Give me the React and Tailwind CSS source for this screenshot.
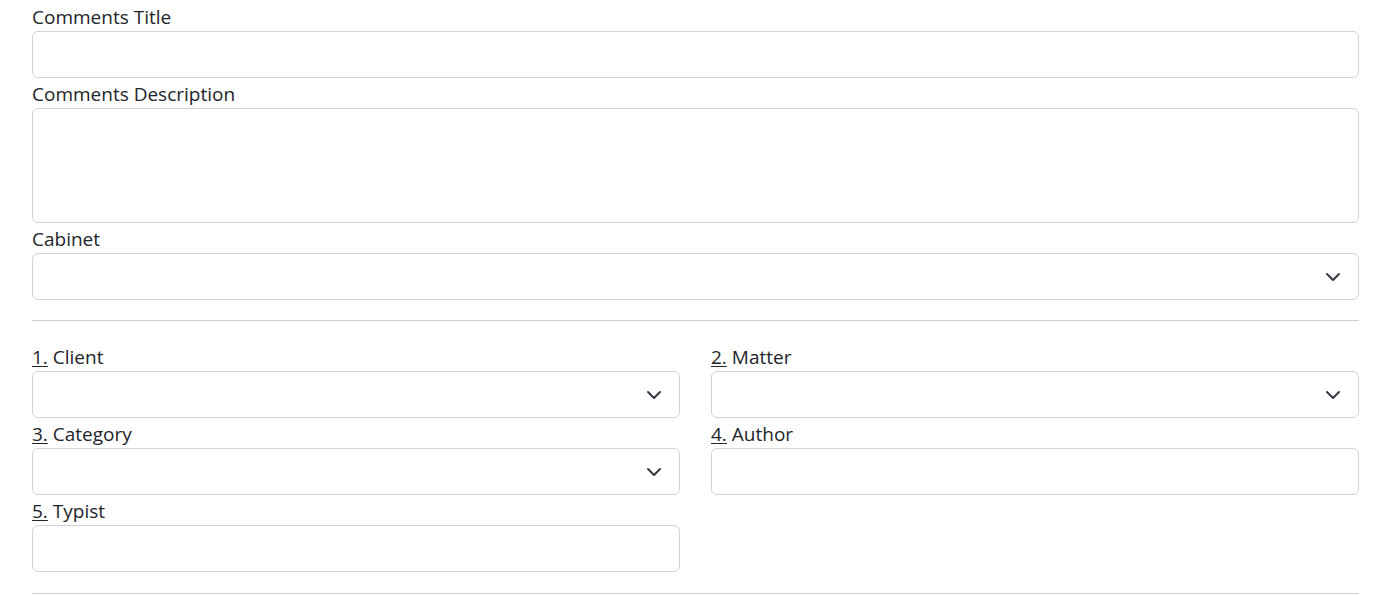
import React from 'react';

const Chevron = () => (
  <svg className="absolute right-[17px] top-1/2 -translate-y-1/2" width="16" height="16" viewBox="0 0 16 16" fill="none">
    <path d="m2 5 6 6 6-6" stroke="#343a40" strokeWidth="2" strokeLinecap="round" strokeLinejoin="round" />
  </svg>
);

const Label = ({ num, children }) => (
  <label className="block h-[30px] pt-[3px] leading-[27px] text-[19px] text-[#212529]">
    {num && <span className="underline underline-offset-2 decoration-1">{num}</span>}
    {num && ' '}
    {children}
  </label>
);

const Input = () => (
  <input type="text" className="block w-full h-[47px] rounded-[6px] border border-[#ced4da] bg-white px-3 outline-none" />
);

const Select = () => (
  <div className="relative h-[47px] w-full rounded-[6px] border border-[#ced4da] bg-white">
    <Chevron />
  </div>
);

const Field = ({ label, num, type = 'input' }) => (
  <div>
    <Label num={num}>{label}</Label>
    {type === 'select' ? <Select /> : <Input />}
  </div>
);

export default function App() {
  return (
    <div className="min-h-screen bg-white pl-[32px] pr-[31px] pt-[1px]" style={{ fontFamily: '"Open Sans", "Noto Sans", sans-serif' }}>
      <Field label="Comments Title" />
      <div>
        <Label>Comments Description</Label>
        <textarea className="block w-full h-[115px] resize-none rounded-[6px] border border-[#ced4da] bg-white outline-none" />
      </div>
      <Field label="Cabinet" type="select" />
      <hr className="mt-[20px] mb-[20px] border-0 h-px bg-[#cfcfcf]" />
      <div className="grid grid-cols-2 gap-x-[31px]">
        <Field num="1." label="Client" type="select" />
        <Field num="2." label="Matter" type="select" />
        <Field num="3." label="Category" type="select" />
        <Field num="4." label="Author" />
        <Field num="5." label="Typist" />
      </div>
      <hr className="mt-[21px] border-0 h-px bg-[#cfcfcf]" />
    </div>
  );
}
